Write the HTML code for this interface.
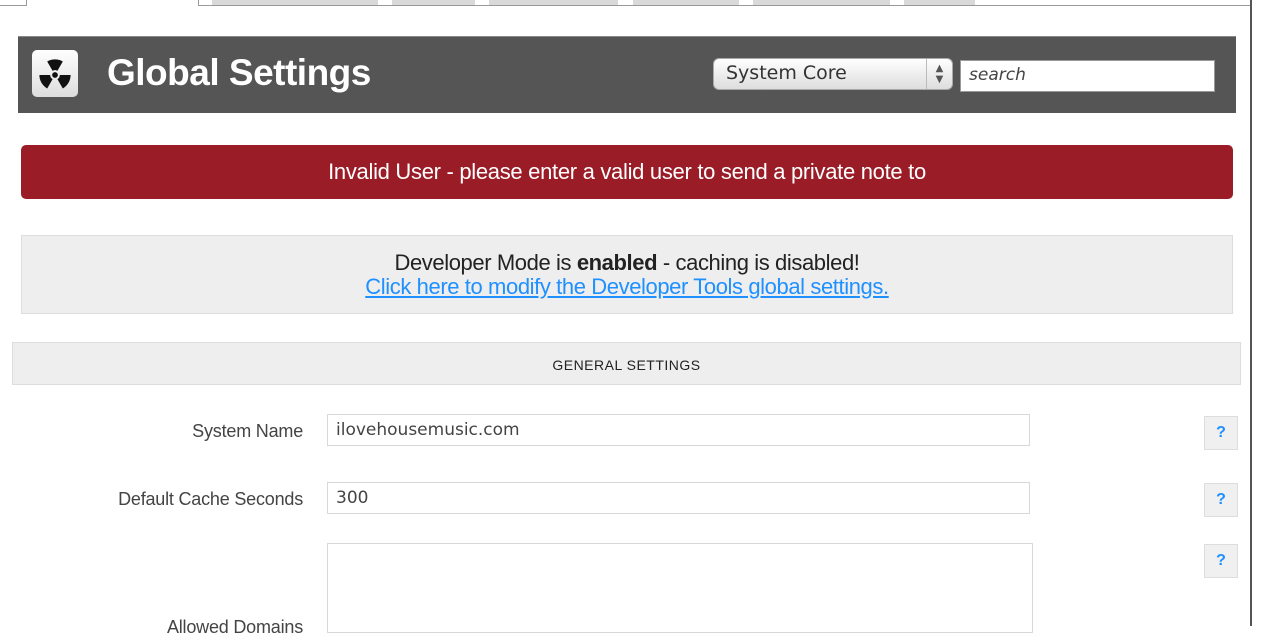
<!DOCTYPE html>
<html><head><meta charset="utf-8"><style>
*{box-sizing:border-box;margin:0;padding:0}
body{width:1280px;height:626px;overflow:hidden;background:#fff;font-family:"Liberation Sans",Arial,sans-serif;position:relative}
.a{position:absolute}
.tab{position:absolute;top:0;height:5px;background:#d9d9d9}
.lbl{position:absolute;right:977px;font-size:18px;color:#444;text-align:right;white-space:nowrap;letter-spacing:-0.2px}
.inp{position:absolute;left:327px;width:703px;height:32px;border:1px solid #d8d8d8;font-family:"DejaVu Sans",sans-serif;font-size:17px;color:#444;padding:5px 8px;background:#fff}
.q{position:absolute;left:1204px;width:34px;height:34px;background:#f0f0f0;border:1px solid #ddd;color:#1e90ff;font-weight:bold;font-size:16px;text-align:center;line-height:32px}
</style></head><body>
<div class="a" style="left:0;top:0;width:27px;height:6px;border-right:1px solid #999;border-bottom:1px solid #999"></div>
<div class="a" style="left:198px;top:0;width:1052px;height:6px;border-left:1px solid #999;border-bottom:1px solid #999"></div>
<div class="tab" style="left:212px;width:166px"></div>
<div class="tab" style="left:392px;width:83px"></div>
<div class="tab" style="left:489px;width:129px"></div>
<div class="tab" style="left:633px;width:106px"></div>
<div class="tab" style="left:753px;width:137px"></div>
<div class="tab" style="left:904px;width:71px"></div>
<div class="a" style="left:1250px;top:0;width:2px;height:626px;background:#555"></div>

<div class="a" style="left:18px;top:36px;width:1218px;height:77px;background:#555;border-top:1px solid #888"></div>
<div class="a" style="left:32px;top:50px;width:46px;height:47px;background:linear-gradient(#fff,#ddd);border-radius:5px">
<svg width="46" height="47" viewBox="0 0 46 47"><g fill="#111" transform="translate(23 25) scale(1.2) translate(-23 -25)">
<path d="M16.5 13.74 A13 13 0 0 1 29.5 13.74 L25 21.54 A4 4 0 0 0 21 21.54Z"/>
<path d="M36 25 A13 13 0 0 1 29.5 36.26 L25 28.46 A4 4 0 0 0 27 25Z"/>
<path d="M16.5 36.26 A13 13 0 0 1 10 25 L19 25 A4 4 0 0 0 21 28.46Z"/>
<circle cx="23" cy="25" r="2.4"/></g></svg></div>
<div class="a" style="left:107px;top:52px;font-size:37px;font-weight:bold;color:#fff;letter-spacing:-0.5px">Global Settings</div>
<div class="a" style="left:713px;top:58px;width:240px;height:32px;border-radius:6px;background:linear-gradient(#fff,#ddd);border:1px solid #aaa;font-family:'DejaVu Sans',sans-serif;font-size:19px;color:#333;padding:3px 12px">System Core<span style="position:absolute;right:0;top:0;width:26px;height:30px;border-left:1px solid #bbb;font-size:10px;line-height:11px;text-align:center;padding-top:4px;color:#555">▲<br>▼</span></div>
<div class="a" style="left:960px;top:60px;width:255px;height:32px;background:#fff;border:1px solid #999;font-family:'DejaVu Sans',sans-serif;font-style:italic;font-size:17px;color:#444;padding:4px 8px">search</div>

<div class="a" style="left:21px;top:145px;width:1212px;height:54px;background:#9a1c27;border-radius:5px;color:#fff;font-size:22px;text-align:center;line-height:54px;letter-spacing:-0.3px">Invalid User - please enter a valid user to send a private note to</div>

<div class="a" style="left:21px;top:235px;width:1212px;height:79px;background:#eee;border:1px solid #ddd;text-align:center;font-size:22px;color:#222;padding-top:15px;line-height:24px;letter-spacing:-0.4px">Developer Mode is <b>enabled</b> - caching is disabled!<br><span style="color:#1e90ff;text-decoration:underline">Click here to modify the Developer Tools global settings.</span></div>

<div class="a" style="left:12px;top:342px;width:1229px;height:43px;background:#eee;border:1px solid #ddd;text-align:center;font-size:14px;line-height:45px;color:#222;letter-spacing:0.5px">GENERAL SETTINGS</div>

<div class="lbl" style="top:421px">System Name</div>
<div class="inp" style="top:414px">ilovehousemusic.com</div>
<div class="q" style="top:416px">?</div>

<div class="lbl" style="top:489px">Default Cache Seconds</div>
<div class="inp" style="top:482px">300</div>
<div class="q" style="top:483px">?</div>

<div class="inp" style="top:543px;width:706px;height:90px"></div>
<div class="q" style="top:544px">?</div>
<div class="lbl" style="top:617px">Allowed Domains</div>
</body></html>
